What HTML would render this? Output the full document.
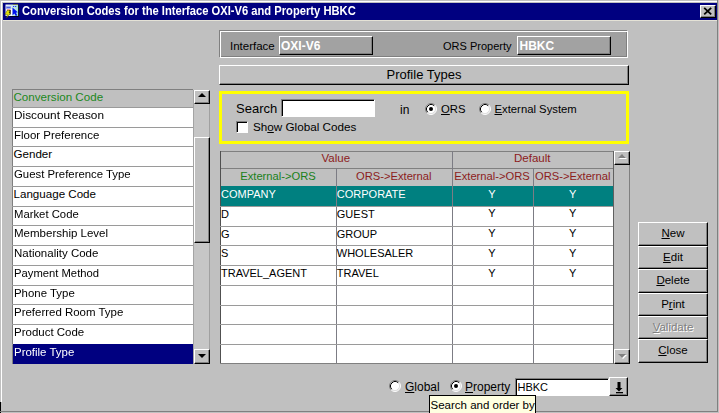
<!DOCTYPE html>
<html><head><meta charset="utf-8">
<style>
*{margin:0;padding:0;box-sizing:border-box}
html,body{width:719px;height:413px;overflow:hidden;background:#c0c0c0;font-family:"Liberation Sans",sans-serif;font-size:11px;color:#000}
.a{position:absolute}
.t{position:absolute;white-space:nowrap;line-height:1}
.raised{background:#c0c0c0;border-top:1px solid #fff;border-left:1px solid #fff;border-right:1px solid #000;border-bottom:1px solid #000;box-shadow:inset -1px -1px 0 #808080}
.sunk{background:#fff;border-top:1px solid #808080;border-left:1px solid #808080;border-right:1px solid #fff;border-bottom:1px solid #fff;box-shadow:inset 1px 1px 0 #000}
u{text-decoration:underline;text-decoration-thickness:1px;text-underline-offset:1px}
</style></head><body>
<!-- window frame -->
<div class="a" style="left:1px;top:1px;width:1px;height:401px;background:#fff"></div>
<div class="a" style="left:1px;top:1px;width:716px;height:1px;background:#fff"></div>
<div class="a" style="left:717px;top:0;width:1px;height:412px;background:#808080"></div>
<div class="a" style="left:0;top:402px;width:1px;height:11px;background:#000"></div>
<div class="a" style="left:0;top:411px;width:718px;height:1px;background:#808080"></div>

<!-- title bar -->
<div class="a" style="left:3px;top:3px;width:714px;height:17px;background:#000080"></div>
<div class="a" style="left:3px;top:20px;width:714px;height:1px;background:#e4e2d6"></div>
<svg class="a" style="left:0;top:0" width="22" height="22" viewBox="0 0 22 22">
  <defs><linearGradient id="pg" x1="0" x2="1" y1="0" y2="0"><stop offset="0" stop-color="#f0f4ff"/><stop offset="1" stop-color="#a8e0d8"/></linearGradient></defs>
  <rect x="5.5" y="4.5" width="12.5" height="11.5" fill="url(#pg)"/>
  <rect x="13" y="4" width="5" height="1" fill="#707050"/>
  <rect x="18" y="5" width="1" height="12" fill="#102020"/>
  <rect x="10" y="16" width="9" height="1" fill="#000020"/>
  <rect x="6" y="6" width="5" height="3" fill="#a4b0f4"/>
  <rect x="6.5" y="7" width="4" height="1" fill="#5060e0"/>
  <rect x="10.5" y="9" width="2" height="7" fill="#ffffff"/>
  <rect x="13" y="6" width="1.2" height="1" fill="#2030ff"/><rect x="15" y="6" width="1.2" height="1" fill="#2030ff"/>
  <path d="M12.5 7.5 L12.5 15.5 L14.3 13.6 L15.8 16 L17.3 15.2 L15.9 12.8 L17.8 12.3 Z" fill="#0010f0"/>
  <rect x="7" y="9" width="3.5" height="3.5" fill="#f0a090"/>
  <rect x="9" y="10" width="1.6" height="4.5" fill="#000"/>
  <path d="M7 10.5 L10 10.5 L9 13 L10.5 13 L6.5 18 L7.5 14.6 L5 14.6 Z" fill="#e2e200" stroke="#404000" stroke-width="0.4"/>
</svg>
<div class="t" style="left:22px;top:5px;font-size:12px;font-weight:bold;color:#fff;transform:scaleX(0.932);transform-origin:0 0">Conversion Codes for the Interface OXI-V6 and Property HBKC</div>
<div class="a raised" style="left:700px;top:5px;width:16px;height:13px"></div>
<svg class="a" style="left:703px;top:7px" width="10" height="9" viewBox="0 0 10 9"><path d="M1.2 0.8 L8.2 7.3 M8.2 0.8 L1.2 7.3" stroke="#000" stroke-width="1.8"/></svg>

<!-- interface frame -->
<div class="a" style="left:219px;top:30px;width:409px;height:28px;background:#a0a0a0;border-top:1px solid #808080;border-left:1px solid #808080;border-right:1px solid #fff;border-bottom:1px solid #fff;box-shadow:inset 1px 1px 0 #fff, inset -1px -1px 0 #808080"></div>
<div class="t" style="left:230px;top:40.5px;font-size:11.5px">Interface</div>
<div class="a" style="left:279px;top:36px;width:94px;height:19px;background:#a2a2a2;border-top:1px solid #fff;border-left:1px solid #fff;border-right:1px solid #000;border-bottom:1px solid #000;box-shadow:inset -1px -1px 0 #808080"></div>
<div class="t" style="left:281px;top:39.5px;font-size:12px;font-weight:bold;color:#fff">OXI-V6</div>
<div class="t" style="left:443px;top:40.5px;font-size:11px">ORS Property</div>
<div class="a" style="left:517px;top:36px;width:94px;height:19px;background:#a2a2a2;border-top:1px solid #fff;border-left:1px solid #fff;border-right:1px solid #000;border-bottom:1px solid #000;box-shadow:inset -1px -1px 0 #808080"></div>
<div class="t" style="left:519.5px;top:39.5px;font-size:12px;font-weight:bold;color:#fff">HBKC</div>

<!-- profile types bar -->
<div class="a raised" style="left:219px;top:65px;width:410px;height:20px"></div>
<div class="t" style="left:219px;top:68px;width:410px;text-align:center;font-size:13px">Profile Types</div>

<!-- yellow search box -->
<div class="a" style="left:219px;top:91px;width:410px;height:53px;border:3px solid #ffff00"></div>
<div class="t" style="left:236px;top:101.5px;font-size:13px">Search</div>
<div class="a sunk" style="left:281px;top:99px;width:94px;height:18px"></div>
<div class="t" style="left:400px;top:103.5px;font-size:12px">in</div>
<!-- radio ORS -->
<svg class="a" style="left:424.5px;top:102.5px" width="12" height="12" viewBox="0 0 12 12"><circle cx="6" cy="6" r="5" fill="#fff"/><path d="M2.11 9.89 A5.5 5.5 0 0 1 9.89 2.11" stroke="#808080" stroke-width="1" fill="none"/><path d="M9.89 2.11 A5.5 5.5 0 0 1 2.11 9.89" stroke="#ffffff" stroke-width="1" fill="none"/><path d="M2.82 9.18 A4.5 4.5 0 0 1 9.18 2.82" stroke="#000" stroke-width="1" fill="none"/><path d="M9.18 2.82 A4.5 4.5 0 0 1 2.82 9.18" stroke="#dfdfdf" stroke-width="1" fill="none"/><circle cx="6" cy="6" r="2" fill="#000"/></svg>
<div class="t" style="left:441px;top:103.5px;font-size:11.3px"><u>O</u>RS</div>
<svg class="a" style="left:478.5px;top:102.5px" width="12" height="12" viewBox="0 0 12 12"><circle cx="6" cy="6" r="5" fill="#fff"/><path d="M2.11 9.89 A5.5 5.5 0 0 1 9.89 2.11" stroke="#808080" stroke-width="1" fill="none"/><path d="M9.89 2.11 A5.5 5.5 0 0 1 2.11 9.89" stroke="#ffffff" stroke-width="1" fill="none"/><path d="M2.82 9.18 A4.5 4.5 0 0 1 9.18 2.82" stroke="#000" stroke-width="1" fill="none"/><path d="M9.18 2.82 A4.5 4.5 0 0 1 2.82 9.18" stroke="#dfdfdf" stroke-width="1" fill="none"/></svg>
<div class="t" style="left:494.5px;top:103.5px;font-size:11.3px"><u>E</u>xternal System</div>
<!-- checkbox -->
<div class="a sunk" style="left:236px;top:121px;width:12px;height:12px"></div>
<div class="t" style="left:253px;top:120.5px;font-size:11.7px">Sh<u>o</u>w Global Codes</div>

<!-- GEN START -->
<div class="a" style="left:12px;top:89px;width:181px;height:274.5px;background:#fff"></div>
<div class="a" style="left:12px;top:89px;width:181px;height:18px;background:#c0c0c0"></div>
<div class="a" style="left:12px;top:89px;width:181px;height:1px;background:#808080"></div>
<div class="a" style="left:12px;top:89px;width:1px;height:275px;background:#808080"></div>
<div class="t" style="left:13.5px;top:90.5px;font-size:11.6px;color:#208820">Conversion Code</div>
<div class="a" style="left:12px;top:106.75px;width:181px;height:1px;background:#9a9a9a"></div>
<div class="t" style="left:13.5px;top:108.75px;font-size:11.6px;color:#000;transform:scaleX(1.019);transform-origin:0 0">Discount Reason</div>
<div class="a" style="left:12px;top:126.50px;width:181px;height:1px;background:#9a9a9a"></div>
<div class="t" style="left:13.5px;top:128.50px;font-size:11.6px;color:#000;transform:scaleX(0.988);transform-origin:0 0">Floor Preference</div>
<div class="a" style="left:12px;top:146.25px;width:181px;height:1px;background:#9a9a9a"></div>
<div class="t" style="left:13.5px;top:148.25px;font-size:11.6px;color:#000">Gender</div>
<div class="a" style="left:12px;top:166.00px;width:181px;height:1px;background:#9a9a9a"></div>
<div class="t" style="left:13.5px;top:168.00px;font-size:11.6px;color:#000;transform:scaleX(0.98);transform-origin:0 0">Guest Preference Type</div>
<div class="a" style="left:12px;top:185.75px;width:181px;height:1px;background:#9a9a9a"></div>
<div class="t" style="left:13.5px;top:187.75px;font-size:11.6px;color:#000">Language Code</div>
<div class="a" style="left:12px;top:205.50px;width:181px;height:1px;background:#9a9a9a"></div>
<div class="t" style="left:13.5px;top:207.50px;font-size:11.6px;color:#000;transform:scaleX(0.975);transform-origin:0 0">Market Code</div>
<div class="a" style="left:12px;top:225.25px;width:181px;height:1px;background:#9a9a9a"></div>
<div class="t" style="left:13.5px;top:227.25px;font-size:11.6px;color:#000;transform:scaleX(0.993);transform-origin:0 0">Membership Level</div>
<div class="a" style="left:12px;top:245.00px;width:181px;height:1px;background:#9a9a9a"></div>
<div class="t" style="left:13.5px;top:247.00px;font-size:11.6px;color:#000;transform:scaleX(0.992);transform-origin:0 0">Nationality Code</div>
<div class="a" style="left:12px;top:264.75px;width:181px;height:1px;background:#9a9a9a"></div>
<div class="t" style="left:13.5px;top:266.75px;font-size:11.6px;color:#000;transform:scaleX(0.97);transform-origin:0 0">Payment Method</div>
<div class="a" style="left:12px;top:284.50px;width:181px;height:1px;background:#9a9a9a"></div>
<div class="t" style="left:13.5px;top:286.50px;font-size:11.6px;color:#000;transform:scaleX(0.985);transform-origin:0 0">Phone Type</div>
<div class="a" style="left:12px;top:304.25px;width:181px;height:1px;background:#9a9a9a"></div>
<div class="t" style="left:13.5px;top:306.25px;font-size:11.6px;color:#000;transform:scaleX(0.988);transform-origin:0 0">Preferred Room Type</div>
<div class="a" style="left:12px;top:324.00px;width:181px;height:1px;background:#9a9a9a"></div>
<div class="t" style="left:13.5px;top:326.00px;font-size:11.6px;color:#000;transform:scaleX(0.991);transform-origin:0 0">Product Code</div>
<div class="a" style="left:12px;top:343.75px;width:181px;height:1px;background:#9a9a9a"></div>
<div class="a" style="left:13px;top:343.75px;width:180px;height:19.75px;background:#000080"></div>
<div class="t" style="left:13.5px;top:345.75px;font-size:11.6px;color:#fff;transform:scaleX(0.988);transform-origin:0 0">Profile Type</div>
<div class="a" style="left:193px;top:89.5px;width:17px;height:274px;background:#c6c6c6;border-left:1.5px solid #a4a4a4;border-right:1px solid #a0a0a0"></div>
<div class="a raised" style="left:194px;top:89.5px;width:16px;height:14.5px;"></div>
<div class="a" style="left:198px;top:93px;width:0;height:0;border-left:4px solid transparent;border-right:4px solid transparent;border-bottom:4px solid #000"></div>
<div class="a raised" style="left:194px;top:137px;width:16px;height:105.5px;"></div>
<div class="a raised" style="left:194px;top:349px;width:16px;height:14.5px;"></div>
<div class="a" style="left:198px;top:354px;width:0;height:0;border-left:4px solid transparent;border-right:4px solid transparent;border-top:4px solid #000"></div>
<div class="a" style="left:220px;top:150.5px;width:393px;height:35.5px;background:#c0c0c0"></div>
<div class="a" style="left:220px;top:186px;width:393px;height:177.75px;background:#fff"></div>
<div class="a" style="left:220px;top:186px;width:393px;height:19.75px;background:#008080"></div>
<div class="a" style="left:220px;top:150.5px;width:393px;height:1px;background:#808080"></div>
<div class="a" style="left:220px;top:168px;width:393px;height:1px;background:#808080"></div>
<div class="a" style="left:220px;top:150.5px;width:1px;height:213.5px;background:#505050"></div>
<div class="a" style="left:613px;top:150.5px;width:1px;height:213.5px;background:#606060"></div>
<div class="a" style="left:451.5px;top:150.5px;width:1px;height:213.5px;background:#7c7c84"></div>
<div class="a" style="left:336px;top:168px;width:1px;height:196px;background:#7c7c84"></div>
<div class="a" style="left:532.5px;top:168px;width:1px;height:196px;background:#7c7c84"></div>
<div class="t" style="left:220px;top:152.5px;width:231.5px;text-align:center;font-size:11.5px;color:#8c1c1c">Value</div>
<div class="t" style="left:451.5px;top:152.5px;width:161.5px;text-align:center;font-size:11.5px;color:#8c1c1c">Default</div>
<div class="t" style="left:220px;top:171px;width:116px;text-align:center;font-size:11.2px;color:#1a801a">External-&gt;ORS</div>
<div class="t" style="left:336px;top:171px;width:115.5px;text-align:center;font-size:11.2px;color:#8c1c1c">ORS-&gt;External</div>
<div class="t" style="left:451.5px;top:171px;width:81.0px;text-align:center;font-size:11.2px;color:#8c1c1c">External-&gt;ORS</div>
<div class="t" style="left:532.5px;top:171px;width:80.5px;text-align:center;font-size:11.2px;color:#8c1c1c">ORS-&gt;External</div>
<div class="t" style="left:221px;top:189.00px;font-size:11px;color:#fff">COMPANY</div>
<div class="t" style="left:336.8px;top:189.00px;font-size:11px;color:#fff">CORPORATE</div>
<div class="t" style="left:451.5px;top:188.50px;width:81.0px;text-align:center;font-size:11px;color:#fff">Y</div>
<div class="t" style="left:532.5px;top:188.50px;width:80.5px;text-align:center;font-size:11px;color:#fff">Y</div>
<div class="a" style="left:220px;top:205.75px;width:393px;height:1px;background:#9a9a9a"></div>
<div class="t" style="left:221px;top:208.75px;font-size:11px;color:#000">D</div>
<div class="t" style="left:336.8px;top:208.75px;font-size:11px;color:#000">GUEST</div>
<div class="t" style="left:451.5px;top:208.25px;width:81.0px;text-align:center;font-size:11px;color:#000">Y</div>
<div class="t" style="left:532.5px;top:208.25px;width:80.5px;text-align:center;font-size:11px;color:#000">Y</div>
<div class="a" style="left:220px;top:225.50px;width:393px;height:1px;background:#9a9a9a"></div>
<div class="t" style="left:221px;top:228.50px;font-size:11px;color:#000">G</div>
<div class="t" style="left:336.8px;top:228.50px;font-size:11px;color:#000">GROUP</div>
<div class="t" style="left:451.5px;top:228.00px;width:81.0px;text-align:center;font-size:11px;color:#000">Y</div>
<div class="t" style="left:532.5px;top:228.00px;width:80.5px;text-align:center;font-size:11px;color:#000">Y</div>
<div class="a" style="left:220px;top:245.25px;width:393px;height:1px;background:#9a9a9a"></div>
<div class="t" style="left:221px;top:248.25px;font-size:11px;color:#000">S</div>
<div class="t" style="left:336.8px;top:248.25px;font-size:11px;color:#000">WHOLESALER</div>
<div class="t" style="left:451.5px;top:247.75px;width:81.0px;text-align:center;font-size:11px;color:#000">Y</div>
<div class="t" style="left:532.5px;top:247.75px;width:80.5px;text-align:center;font-size:11px;color:#000">Y</div>
<div class="a" style="left:220px;top:265.00px;width:393px;height:1px;background:#9a9a9a"></div>
<div class="t" style="left:221px;top:268.00px;font-size:11px;color:#000">TRAVEL_AGENT</div>
<div class="t" style="left:336.8px;top:268.00px;font-size:11px;color:#000">TRAVEL</div>
<div class="t" style="left:451.5px;top:267.50px;width:81.0px;text-align:center;font-size:11px;color:#000">Y</div>
<div class="t" style="left:532.5px;top:267.50px;width:80.5px;text-align:center;font-size:11px;color:#000">Y</div>
<div class="a" style="left:220px;top:284.75px;width:393px;height:1px;background:#9a9a9a"></div>
<div class="a" style="left:220px;top:304.50px;width:393px;height:1px;background:#9a9a9a"></div>
<div class="a" style="left:220px;top:324.25px;width:393px;height:1px;background:#9a9a9a"></div>
<div class="a" style="left:220px;top:344.00px;width:393px;height:1px;background:#9a9a9a"></div>
<div class="a" style="left:220px;top:363px;width:393px;height:1px;background:#808080"></div>
<div class="a" style="left:614px;top:150.5px;width:16px;height:213px;background:#c0c0c0;border-right:1px solid #808080"></div>
<div class="a raised" style="left:614px;top:150.5px;width:16px;height:14.5px;"></div>
<div class="a" style="left:619px;top:155px;width:0;height:0;border-left:4px solid transparent;border-right:4px solid transparent;border-bottom:4px solid #fff"></div>
<div class="a" style="left:618px;top:154px;width:0;height:0;border-left:4px solid transparent;border-right:4px solid transparent;border-bottom:4px solid #808080"></div>
<div class="a raised" style="left:614px;top:349.3px;width:16px;height:14.7px;"></div>
<div class="a" style="left:619px;top:355px;width:0;height:0;border-left:4px solid transparent;border-right:4px solid transparent;border-top:4px solid #fff"></div>
<div class="a" style="left:618px;top:354px;width:0;height:0;border-left:4px solid transparent;border-right:4px solid transparent;border-top:4px solid #808080"></div>
<div class="a raised" style="left:638px;top:222px;width:70px;height:24px;"></div>
<div class="t" style="left:638px;top:228.00px;width:70px;text-align:center;font-size:11.5px;color:#000;"><u>N</u>ew</div>
<div class="a raised" style="left:638px;top:246px;width:70px;height:23px;"></div>
<div class="t" style="left:638px;top:252.00px;width:70px;text-align:center;font-size:11.5px;color:#000;"><u>E</u>dit</div>
<div class="a raised" style="left:638px;top:269px;width:70px;height:24px;"></div>
<div class="t" style="left:638px;top:275.00px;width:70px;text-align:center;font-size:11.5px;color:#000;"><u>D</u>elete</div>
<div class="a raised" style="left:638px;top:293px;width:70px;height:23px;"></div>
<div class="t" style="left:638px;top:299.00px;width:70px;text-align:center;font-size:11.5px;color:#000;">P<u>r</u>int</div>
<div class="a raised" style="left:638px;top:316px;width:70px;height:23px;"></div>
<div class="t" style="left:638px;top:322.00px;width:70px;text-align:center;font-size:11.5px;color:#808080;text-shadow:1px 1px 0 #fff"><u>V</u>alidate</div>
<div class="a raised" style="left:638px;top:339px;width:70px;height:24px;"></div>
<div class="t" style="left:638px;top:345.00px;width:70px;text-align:center;font-size:11.5px;color:#000;"><u>C</u>lose</div>
<!-- GEN END -->

<!-- bottom -->
<svg class="a" style="left:389.3px;top:380.3px" width="12" height="12" viewBox="0 0 12 12"><circle cx="6" cy="6" r="5" fill="#fff"/><path d="M2.11 9.89 A5.5 5.5 0 0 1 9.89 2.11" stroke="#808080" stroke-width="1" fill="none"/><path d="M9.89 2.11 A5.5 5.5 0 0 1 2.11 9.89" stroke="#ffffff" stroke-width="1" fill="none"/><path d="M2.82 9.18 A4.5 4.5 0 0 1 9.18 2.82" stroke="#000" stroke-width="1" fill="none"/><path d="M9.18 2.82 A4.5 4.5 0 0 1 2.82 9.18" stroke="#dfdfdf" stroke-width="1" fill="none"/></svg>
<div class="t" style="left:405px;top:381px;font-size:12px"><u>G</u>lobal</div>
<svg class="a" style="left:449.5px;top:380.3px" width="12" height="12" viewBox="0 0 12 12"><circle cx="6" cy="6" r="5" fill="#fff"/><path d="M2.11 9.89 A5.5 5.5 0 0 1 9.89 2.11" stroke="#808080" stroke-width="1" fill="none"/><path d="M9.89 2.11 A5.5 5.5 0 0 1 2.11 9.89" stroke="#ffffff" stroke-width="1" fill="none"/><path d="M2.82 9.18 A4.5 4.5 0 0 1 9.18 2.82" stroke="#000" stroke-width="1" fill="none"/><path d="M9.18 2.82 A4.5 4.5 0 0 1 2.82 9.18" stroke="#dfdfdf" stroke-width="1" fill="none"/><circle cx="6" cy="6" r="2" fill="#000"/></svg>
<div class="t" style="left:465px;top:381px;font-size:12px"><u>P</u>roperty</div>
<div class="a sunk" style="left:515px;top:377.5px;width:94px;height:18px"></div>
<div class="t" style="left:517.5px;top:381.5px;font-size:11px">HBKC</div>
<div class="a raised" style="left:609px;top:377px;width:19px;height:19px"></div>
<svg class="a" style="left:609px;top:377px" width="19" height="19" viewBox="0 0 19 19"><path d="M8.5 5 H11.5 V11 H13.5 L10 14.5 L6.5 11 H8.5 Z" fill="#000"/><rect x="7" y="15" width="7" height="1.3" fill="#000"/></svg>

<!-- tooltip -->
<div class="a" style="left:429px;top:395px;width:107px;height:20px;background:#ffffe1;border:1px solid #000"></div>
<div class="t" style="left:430.5px;top:399.5px;font-size:11.5px">Search and order by</div>
</body></html>
